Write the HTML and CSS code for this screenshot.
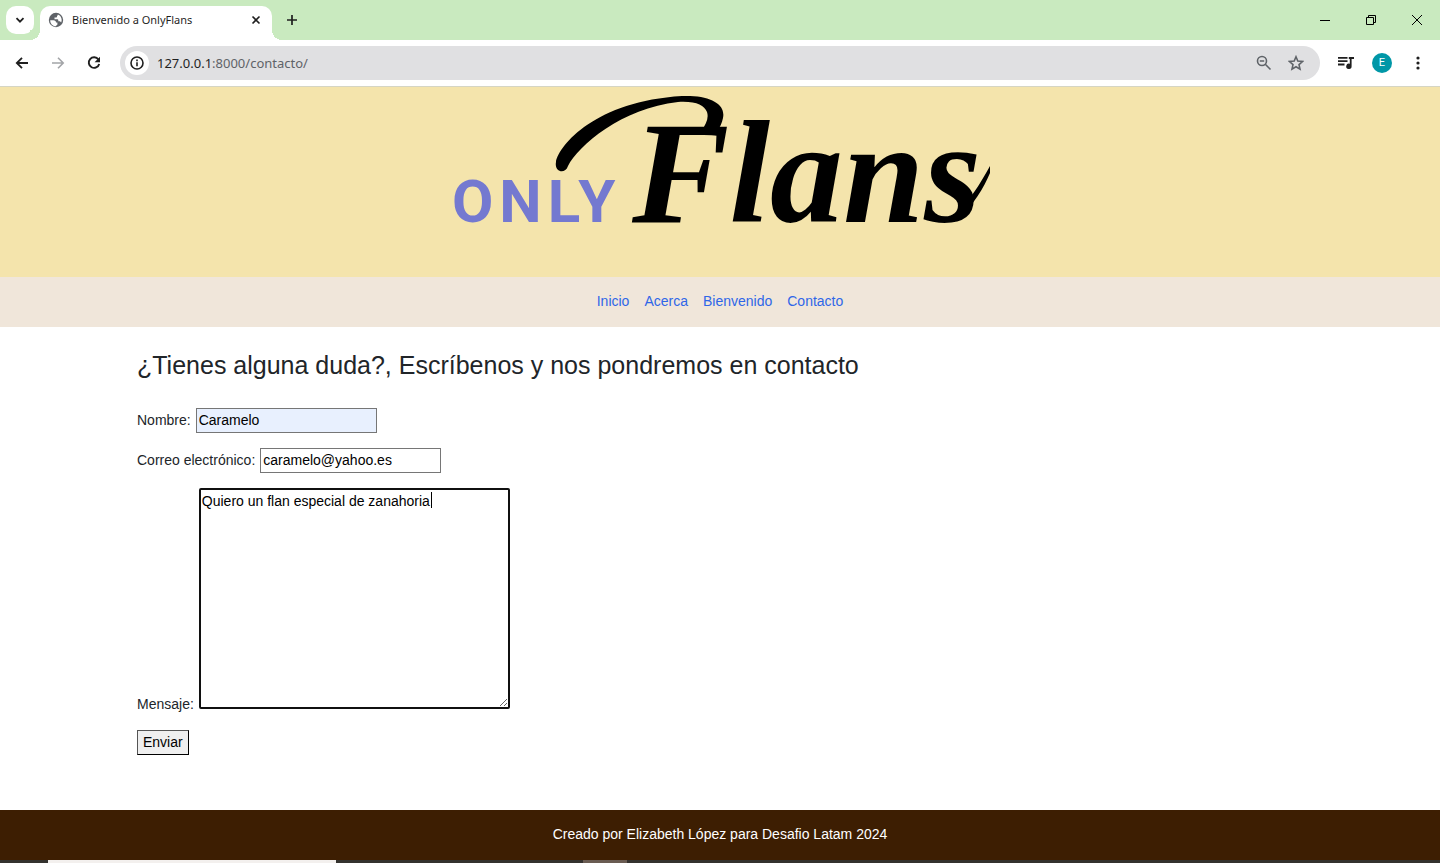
FILE: index.html
```html
<!DOCTYPE html>
<html lang="es">
<head>
<meta charset="utf-8">
<title>Bienvenido a OnlyFlans</title>
<link rel="stylesheet" href="styles.css">
</head>
<body>
<div class="tabbar">
  <button class="tab-search" aria-label="Buscar pestañas"><svg width="10" height="10" viewBox="0 0 10 10" fill="none" stroke="#1f1f1f" stroke-width="1.800"><path d="M1.500 3.200L5 6.700l3.500-3.500"/></svg></button>
  <div class="tab">
    <svg width="16" height="16" viewBox="0 0 16 16"><circle cx="8" cy="8" r="7.2" fill="#5f6368"/><path d="M2.200 8.200h3.300c1.600 0 2.500 1 2.500 2.200h1.400v1.800c0 .7-.5 1.200-1.200 1.200v.9C4.900 14.300 2.200 11.800 2.200 8.200z" fill="#fff"/><path d="M9.800 2.500c2.300.8 3.900 2.900 3.900 5.500 0 .9-.2 1.800-.6 2.500-.4-.8-1.200-1.200-2-1.200h-.8V8.200c0-.6-.5-1-1.100-1H6.500V5.600h1.400c.6 0 1.100-.4 1.100-1V3.900c.5 0 .8-.6.8-1.400z" fill="#fff"/></svg>
    <span class="tab-title">Bienvenido a OnlyFlans</span>
    <button class="icon" aria-label="Cerrar pestaña"><svg width="10" height="10" viewBox="0 0 10 10" stroke="#1f1f1f" stroke-width="1.600"><path d="M1.500 1.500l7 7M8.500 1.500l-7 7"/></svg></button>
  </div>
  <button class="icon new-tab" aria-label="Nueva pestaña"><svg width="12" height="12" viewBox="0 0 12 12" stroke="#1f1f1f" stroke-width="1.700"><path d="M6 1v10M1 6h10"/></svg></button>
  <div class="window-buttons">
    <button class="icon" aria-label="Minimizar"><svg width="12" height="12" viewBox="0 0 12 12"><path d="M1 6h10v1H1z"/></svg></button>
    <button class="icon" aria-label="Restaurar"><svg width="12" height="12" viewBox="0 0 12 12" fill="none" stroke="#000"><path d="M1.500 3.500h7v7h-7zM3.500 3.500v-2h7v7h-2"/></svg></button>
    <button class="icon" aria-label="Cerrar"><svg width="12" height="12" viewBox="0 0 12 12" stroke="#000"><path d="M1 1l10 10M11 1L1 11"/></svg></button>
  </div>
</div>
<div class="toolbar">
  <div class="history">
    <button class="icon" aria-label="Atrás"><svg width="16" height="16" viewBox="0 0 16 16" fill="none" stroke="#1f1f1f" stroke-width="1.800"><path d="M14 8H3M8 2.800L2.800 8 8 13.200"/></svg></button>
    <button class="icon" aria-label="Adelante"><svg width="16" height="16" viewBox="0 0 16 16" fill="none" stroke="#a3a5a8" stroke-width="1.600"><path d="M2 8h11M8 2.800L13.200 8 8 13.200"/></svg></button>
    <button class="icon" aria-label="Recargar"><svg width="16" height="16" viewBox="0 0 16 16"><path d="M12.400 4.500A5.300 5.300 0 1 0 13.200 9" fill="none" stroke="#1f1f1f" stroke-width="1.900"/><path d="M14 1.800v5.400H8.600z" fill="#1f1f1f"/></svg></button>
  </div>
  <div class="omnibox">
    <button class="site-info" aria-label="Información del sitio"><svg width="16" height="16" viewBox="0 0 16 16" fill="none" stroke="#1f1f1f" stroke-width="1.600"><circle cx="8" cy="8" r="6"/><path d="M8 7.200V11.200M8 4.600v1.600"/></svg></button>
    <span class="url"><b>127.0.0.1</b>:8000/contacto/</span>
    <button class="icon" aria-label="Zoom"><svg width="16" height="16" viewBox="0 0 16 16" fill="none" stroke="#5f6368" stroke-width="1.600"><circle cx="6" cy="6" r="4.500"/><path d="M9.300 9.300l5.200 5.200M3.800 6h4.400"/></svg></button>
    <button class="icon" aria-label="Marcador"><svg width="16" height="16" viewBox="0 0 16 16" fill="none" stroke="#5f6368" stroke-width="1.600"><path d="M8 1.800l1.800 4.300 4.700.4-3.500 3.100 1 4.500L8 11.700l-4 2.400 1-4.500-3.500-3.100 4.700-.4z"/></svg></button>
  </div>
  <button class="icon" aria-label="Multimedia"><svg width="16" height="16" viewBox="0 0 16 16"><path d="M0 2h9.500v1.800H0zM0 5.300h9.500v1.800H0zM0 8.600h6.500v1.800H0z" fill="#1f1f1f"/><path d="M10.800 2H16v2h-2.400v7.200a2.700 2.700 0 1 1-1.800-2.500V4h-1z" fill="#1f1f1f"/></svg></button>
  <button class="avatar">E</button>
  <button class="icon" aria-label="Menú"><svg width="16" height="16" viewBox="0 0 16 16" fill="#1f1f1f"><circle cx="8" cy="3" r="1.600"/><circle cx="8" cy="8" r="1.600"/><circle cx="8" cy="13" r="1.600"/></svg></button>
</div>
<header class="banner">
  <svg class="logo" width="540" height="150" viewBox="0 0 540 150" role="img" aria-label="Only Flans">
    <text class="logo-only" x="2" y="126">ONLY</text>
    <path d="M106 66C109 49 146 5 232 0C260-1 276 8 273 22C272 27 270 31 268 34H252C256 28 259 22 257 16C254 9 246 5 228 6C172 12 128 50 118 70C115 79 104 76 106 66z"/>
    <text class="logo-script" x="182" y="126">Flans</text>
    <path d="M508 121C523 111 534 91 540 77V70C529 90 519 105 508 115z"/>
  </svg>
</header>
<nav class="menu">
  <a href="#">Inicio</a><a href="#">Acerca</a><a href="#">Bienvenido</a><a href="#">Contacto</a>
</nav>
<main class="content">
  <h1>¿Tienes alguna duda?, Escríbenos y nos pondremos en contacto</h1>
  <form class="form">
    <div class="field"><label for="nombre">Nombre:</label><input class="filled" id="nombre" type="text" value="Caramelo"></div>
    <div class="field"><label for="correo">Correo electrónico:</label><input id="correo" type="email" value="caramelo@yahoo.es"></div>
    <div class="field message"><label for="mensaje">Mensaje:</label><div class="area"><textarea id="mensaje" spellcheck="false">Quiero un flan especial de zanahoria</textarea><span class="caret"></span></div></div>
    <button class="send" type="submit">Enviar</button>
  </form>
</main>
<footer class="footer">Creado por Elizabeth López para Desafio Latam 2024</footer>
<div class="taskbar"><span class="task-search"></span><span class="task-app"></span></div>
</body>
</html>
```
FILE: styles.css
```css
* { box-sizing: border-box; }
body {
  margin: 0;
  min-height: 100vh;
  display: flex;
  flex-direction: column;
  background: #fff;
  color: #212529;
  font: 14px/22px "Liberation Sans", Arial, sans-serif;
}
button { font: inherit; padding: 0; border: 0; background: none; }
svg { display: block; }
.icon { flex: none; display: flex; align-items: center; justify-content: center; }

.tabbar {
  display: flex;
  height: 40px;
  padding-left: 6px;
  align-items: center;
  background: #c9eabf;
}
.tab-search {
  width: 28px;
  height: 28px;
  display: grid;
  place-items: center;
  border-radius: 10px;
  background: #fff;
}
.tab {
  position: relative;
  display: flex;
  align-items: center;
  align-self: flex-end;
  width: 232px;
  height: 34px;
  margin-left: 6px;
  padding: 0 11px 6px 8px;
  gap: 8px;
  border-radius: 10px 10px 0 0;
  background: #fff;
}
.tab::before, .tab::after {
  content: "";
  position: absolute;
  bottom: 0;
  width: 10px;
  height: 10px;
}
.tab::before { left: -10px; background: radial-gradient(circle at 0 0, #c9eabf 10px, #fff 10px); }
.tab::after { right: -10px; background: radial-gradient(circle at 100% 0, #c9eabf 10px, #fff 10px); }
.tab-title { flex: 1; color: #1f1f1f; font: 11px/16px "Noto Sans", sans-serif; }
.new-tab { margin-left: 14px; }
.window-buttons { display: flex; margin-left: auto; }
.window-buttons .icon { width: 46px; height: 40px; }

.toolbar {
  display: flex;
  align-items: center;
  height: 47px;
  padding: 0 14px;
  gap: 18px;
  border-bottom: 1px solid #d5d5c4;
  background: #fff;
}
.history { display: flex; gap: 20px; }
.omnibox {
  flex: 1;
  display: flex;
  align-items: center;
  height: 34px;
  padding: 0 16px 0 5px;
  gap: 16px;
  border-radius: 17px;
  background: #e0e0e2;
}
.site-info {
  width: 24px;
  height: 24px;
  display: grid;
  place-items: center;
  border-radius: 50%;
  background: #fff;
}
.url { flex: 1; margin-left: -8px; color: #5f6368; font: 13px/20px "Noto Sans", sans-serif; }
.url b { color: #1f1f1f; font-weight: 400; }
.avatar {
  width: 20px;
  height: 20px;
  border-radius: 50%;
  background: #0097a7;
  color: #fff;
  font: 11px/20px Roboto, sans-serif;
}

.banner {
  display: flex;
  justify-content: center;
  height: 190px;
  padding-top: 9px;
  background: #f4e4ac;
}
.logo-only { fill: #7479d0; font: 700 60px Roboto, sans-serif; letter-spacing: 6px; }
.logo-script { font: italic 700 146px "Liberation Serif", serif; }

.menu {
  display: flex;
  justify-content: center;
  align-items: center;
  height: 50px;
  padding-bottom: 2px;
  gap: 15px;
  background: #f0e6da;
}
.menu a { color: #2f66e8; text-decoration: none; }

.content {
  flex: 1;
  width: 100%;
  max-width: 1188px;
  margin: 0 auto;
  padding: 22px 11px;
}
.content h1 { margin: 0 0 27px; font-size: 25px; line-height: 32px; font-weight: 400; }
.form { display: flex; flex-direction: column; align-items: flex-start; gap: 15px; }
.field { display: flex; align-items: center; gap: 5px; }
.field label { padding-bottom: 2px; }
.field input {
  width: 181px;
  height: 25px;
  padding: 0 2px 2px;
  border: 1px solid #767676;
  background: #fff;
  color: #000;
  font: inherit;
}
.field .filled { background: #e8f0fe; }
.message { align-items: flex-end; margin-bottom: 6px; }
.message label { padding: 0; line-height: 10px; }
.area { position: relative; }
.area textarea {
  display: block;
  width: 311px;
  height: 221px;
  padding: 0 1px;
  border: 2px solid #101010;
  border-radius: 2px;
  outline: 0;
  color: #000;
  font: inherit;
  resize: both;
}
.caret {
  position: absolute;
  left: 232px;
  top: 4px;
  width: 1px;
  height: 16px;
  background: #000;
}
.send {
  height: 25px;
  padding: 0 5px 2px;
  border: 1px solid #000;
  border-top-color: #555;
  border-left-color: #555;
  background: #efefef;
  color: #000;
}

.footer {
  height: 50px;
  background: #3d1e02;
  color: #fff;
  line-height: 48px;
  text-align: center;
}
.taskbar { display: flex; height: 3px; background: #34322e; }
.task-search { width: 288px; margin-left: 48px; background: #f3f0ee; }
.task-app { width: 44px; margin-left: 247px; background: #6a5c52; }
```
